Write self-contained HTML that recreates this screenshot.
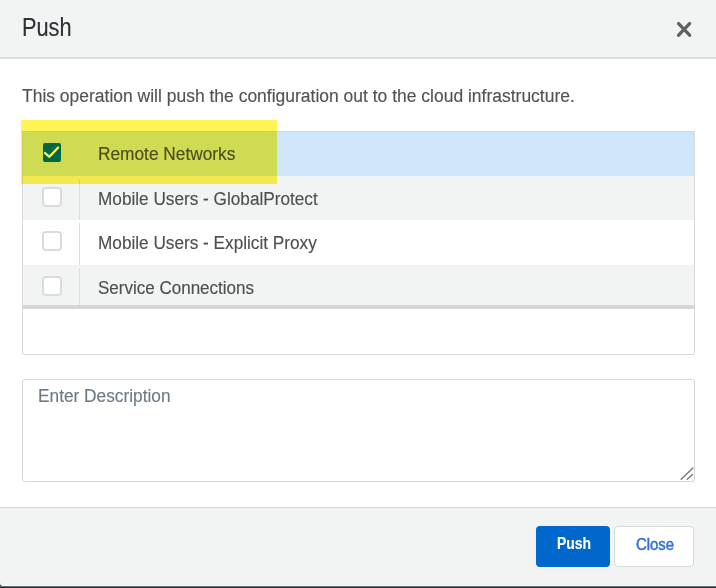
<!DOCTYPE html>
<html><head><meta charset="utf-8">
<style>
*{margin:0;padding:0;box-sizing:border-box}
html,body{width:716px;height:588px;overflow:hidden;background:#fff;font-family:"Liberation Sans",sans-serif}
#wrap{position:absolute;left:0;top:0;width:716px;height:588px}
.abs{position:absolute}
#hdr{left:0;top:0;width:716px;height:59px;background:#f2f3f3;border-bottom:2px solid #dcdede}
.t{position:absolute;white-space:nowrap;line-height:1;transform-origin:0 0;-webkit-text-stroke:0.15px currentColor}
#tbl{left:22px;top:131px;width:673px;height:224px;border:1px solid #d7d9d9;border-radius:0 0 2px 2px;background:#fff}
.row{position:absolute;left:0;width:671px}
.cb{position:absolute;left:19px;width:20px;height:20px;border:2px solid #dadcdc;border-radius:4px;background:#fff}
.div{position:absolute;left:56px;width:1px;background:#dcdede}
#ta{left:22px;top:379px;width:673px;height:103px;border:1px solid #d7d9d9;border-radius:3px;background:#fff}
#ftr{left:0;top:507px;width:716px;height:79px;background:#f2f3f3;border-top:1px solid #d7d9d9;border-bottom:1px solid #f7f8f8;border-bottom-left-radius:3px}
#botc{left:0;top:582px;width:6px;height:6px;background:#2b303b}
#bpush{left:536px;top:526px;width:74px;height:41px;background:#0067cc;border-radius:4px}
#bclose{left:614px;top:526px;width:80px;height:41px;background:#fff;border:1px solid #d7d9d9;border-radius:4px}
#hl{left:21px;top:120px;width:256px;height:64px;background:rgb(255,244,84);mix-blend-mode:multiply}
#bot{left:0;top:586px;width:716px;height:2px;background:linear-gradient(#6a707a 0 50%,#252a35 50% 100%)}
</style></head><body><div id="wrap">
<div id="hdr" class="abs"></div>
<svg class="abs" style="left:676px;top:21px" width="17" height="17" viewBox="0 0 17 17"><path d="M2.6 2.6L13.6 14.2M13.6 2.6L2.6 14.2" stroke="#606060" stroke-width="3.3" stroke-linecap="round"/></svg>

<div id="tbl" class="abs">
  <div class="row" style="top:0;height:44px;background:#cfe6fa">
    <div class="cb" style="left:20px;width:18px;height:19px;top:11px;background:#006cd0;border-color:#006cd0;border-radius:2px"></div>
    <svg class="abs" style="left:20px;top:11px" width="18" height="19" viewBox="0 0 18 19"><path d="M2 10L6.4 13.8L15.2 4.5" stroke="#fff" stroke-width="2.3" stroke-linecap="round" stroke-linejoin="round" fill="none"/></svg>
    <div class="div" style="top:3px;height:41px"></div>
  </div>
  <div class="row" style="top:44px;height:44px;background:#f2f3f3">
    <div class="cb" style="top:11px"></div>
    <div class="div" style="top:3px;height:41px"></div>
  </div>
  <div class="row" style="top:88px;height:45px;background:#fff">
    <div class="cb" style="top:11px"></div>
    <div class="div" style="top:3px;height:42px"></div>
  </div>
  <div class="row" style="top:133px;height:44px;background:#f2f3f3;border-bottom:4px solid #d5d7d7">
    <div class="cb" style="top:11px"></div>
    <div class="div" style="top:3px;height:37px"></div>
  </div>
</div>

<div id="ta" class="abs"></div>
<svg class="abs" style="left:678px;top:465px" width="16" height="16" viewBox="0 0 16 16"><path d="M3.2 14.2L14.9 3.1M9.2 14.3L14.5 9.5" stroke="#777" stroke-width="1.4" stroke-linecap="round"/></svg>

<div id="botc" class="abs"></div>
<div id="ftr" class="abs"></div>
<div id="bpush" class="abs"></div>
<div id="bclose" class="abs"></div>
<div class="t" style="left:22px;top:15px;font-size:25px;transform:scaleX(0.87);color:#2e3236;font-weight:normal">Push</div>
<div class="t" style="left:22px;top:86.8px;font-size:18px;transform:scaleX(0.971);color:#505356;font-weight:normal">This operation will push the configuration out to the cloud infrastructure.</div>
<div class="t" style="left:98px;top:145.0px;font-size:18px;transform:scaleX(0.96);color:#4d4f52;font-weight:normal">Remote Networks</div>
<div class="t" style="left:98px;top:190.0px;font-size:18px;transform:scaleX(0.955);color:#4d4f52;font-weight:normal">Mobile Users - GlobalProtect</div>
<div class="t" style="left:98px;top:234.0px;font-size:18px;transform:scaleX(0.955);color:#4d4f52;font-weight:normal">Mobile Users - Explicit Proxy</div>
<div class="t" style="left:98px;top:278.6px;font-size:18px;transform:scaleX(0.945);color:#4d4f52;font-weight:normal">Service Connections</div>
<div class="t" style="left:37.5px;top:386.5px;font-size:18px;transform:scaleX(0.96);color:#6d7a88;font-weight:normal">Enter Description</div>
<div class="t" style="left:556.5px;top:536px;font-size:16px;transform:scaleX(0.87);color:#ffffff;font-weight:bold">Push</div>
<div class="t" style="left:635.8px;top:536.3px;font-size:16.3px;transform:scaleX(0.915);color:#3370d6;-webkit-text-stroke:0.5px #3370d6;font-weight:normal">Close</div>

<div id="bot" class="abs"></div>
<div id="hl" class="abs"></div>
</div></body></html>
